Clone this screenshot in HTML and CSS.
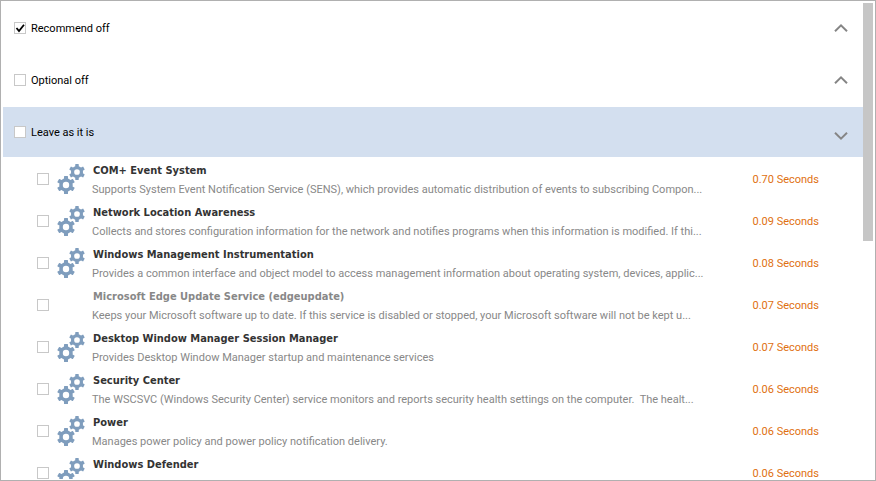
FILE: index.html
```html
<!DOCTYPE html>
<html lang="en">
<head>
  <meta charset="UTF-8" />
  <title>Services</title>
  <link rel="stylesheet" href="styles.css">
</head>
<body>
  <svg class="sprite" aria-hidden="true">
    <symbol id="gear" viewBox="-9 -9 18 18">
      <circle r="5" fill="none" stroke="currentColor" stroke-width="3.6" />
      <g fill="currentColor">
        <rect id="tooth" x="-2" y="-9" width="4" height="3.6" rx=".5" />
        <use href="#tooth" transform="rotate(60)" />
        <use href="#tooth" transform="rotate(120)" />
        <use href="#tooth" transform="rotate(180)" />
        <use href="#tooth" transform="rotate(240)" />
        <use href="#tooth" transform="rotate(300)" />
      </g>
    </symbol>
    <symbol id="gears" viewBox="0 0 28 30">
      <use href="#gear" x="0" y="12" width="18" height="18" />
      <use href="#gear" x="12" y="0" width="16" height="16" />
    </symbol>
    <symbol id="chevron" viewBox="0 0 14 8">
      <path d="M1 7.2 7 1.4l6 5.8" fill="none" stroke="currentColor" stroke-width="2" />
    </symbol>
  </svg>

  <main class="window">
    <div class="list">
      <header class="group">
        <label class="group-label"><input type="checkbox" checked /><span>Recommend off</span></label>
        <button type="button" class="toggle" aria-label="Expand Recommend off"><svg><use href="#chevron" /></svg></button>
      </header>
      <header class="group">
        <label class="group-label"><input type="checkbox" /><span>Optional off</span></label>
        <button type="button" class="toggle" aria-label="Expand Optional off"><svg><use href="#chevron" /></svg></button>
      </header>
      <header class="group active">
        <label class="group-label"><input type="checkbox" /><span>Leave as it is</span></label>
        <button type="button" class="toggle open" aria-label="Collapse Leave as it is"><svg><use href="#chevron" /></svg></button>
      </header>

      <ul class="services">
        <li class="service">
          <input type="checkbox" id="s1" />
          <svg class="icon"><use href="#gears" /></svg>
          <label class="info" for="s1">
            <span class="name">COM+ Event System</span>
            <span class="desc">Supports System Event Notification Service (SENS), which provides automatic distribution of events to subscribing Compon...</span>
          </label>
          <span class="time">0.70 Seconds</span>
        </li>
        <li class="service">
          <input type="checkbox" id="s2" />
          <svg class="icon"><use href="#gears" /></svg>
          <label class="info" for="s2">
            <span class="name">Network Location Awareness</span>
            <span class="desc">Collects and stores configuration information for the network and notifies programs when this information is modified. If thi...</span>
          </label>
          <span class="time">0.09 Seconds</span>
        </li>
        <li class="service">
          <input type="checkbox" id="s3" />
          <svg class="icon"><use href="#gears" /></svg>
          <label class="info" for="s3">
            <span class="name">Windows Management Instrumentation</span>
            <span class="desc">Provides a common interface and object model to access management information about operating system, devices, applic...</span>
          </label>
          <span class="time">0.08 Seconds</span>
        </li>
        <li class="service disabled">
          <input type="checkbox" id="s4" />
          <span class="icon"></span>
          <label class="info" for="s4">
            <span class="name">Microsoft Edge Update Service (edgeupdate)</span>
            <span class="desc">Keeps your Microsoft software up to date. If this service is disabled or stopped, your Microsoft software will not be kept u...</span>
          </label>
          <span class="time">0.07 Seconds</span>
        </li>
        <li class="service">
          <input type="checkbox" id="s5" />
          <svg class="icon"><use href="#gears" /></svg>
          <label class="info" for="s5">
            <span class="name">Desktop Window Manager Session Manager</span>
            <span class="desc">Provides Desktop Window Manager startup and maintenance services</span>
          </label>
          <span class="time">0.07 Seconds</span>
        </li>
        <li class="service">
          <input type="checkbox" id="s6" />
          <svg class="icon"><use href="#gears" /></svg>
          <label class="info" for="s6">
            <span class="name">Security Center</span>
            <span class="desc">The WSCSVC (Windows Security Center) service monitors and reports security health settings on the computer.&nbsp; The healt...</span>
          </label>
          <span class="time">0.06 Seconds</span>
        </li>
        <li class="service">
          <input type="checkbox" id="s7" />
          <svg class="icon"><use href="#gears" /></svg>
          <label class="info" for="s7">
            <span class="name">Power</span>
            <span class="desc">Manages power policy and power policy notification delivery.</span>
          </label>
          <span class="time">0.06 Seconds</span>
        </li>
        <li class="service">
          <input type="checkbox" id="s8" />
          <svg class="icon"><use href="#gears" /></svg>
          <label class="info" for="s8">
            <span class="name">Windows Defender</span>
          </label>
          <span class="time">0.06 Seconds</span>
        </li>
      </ul>
    </div>
    <div class="scrollbar"><div class="thumb"></div></div>
  </main>
</body>
</html>
```
FILE: styles.css
```css
* {
  box-sizing: border-box;
}
body {
  margin: 0;
  background: #fff;
  font-family: Tahoma, Roboto, sans-serif;
  font-size: 11px;
  line-height: 14px;
  color: #000;
}
.sprite {
  display: none;
}
.window {
  display: flex;
  height: 100vh;
  padding: 2px 2px 1px;
  border: 1px solid #b0b0b0;
  overflow: hidden;
}
.list {
  flex: 1;
  min-width: 0;
  overflow: hidden;
}
.group {
  display: flex;
  align-items: center;
  justify-content: space-between;
  height: 50px;
  margin-bottom: 2px;
  padding: 0 15px 0 11px;
}
.group.active {
  background: #d3dfef;
  margin-bottom: 1px;
}
.group-label {
  display: flex;
  align-items: center;
  gap: 5px;
}
.group-label span {
  padding-top: 2px;
}
input[type="checkbox"] {
  appearance: none;
  flex: none;
  width: 12px;
  height: 12px;
  margin: 0;
  border: 1px solid #c8c8c8;
  background: #fff;
}
input[type="checkbox"]:checked {
  background: #fff url("data:image/svg+xml,%3Csvg xmlns='http://www.w3.org/2000/svg' viewBox='0 0 10 10'%3E%3Cpath d='M1.5 5 4 8 9 1.8' fill='none' stroke='%23000' stroke-width='1.8'/%3E%3C/svg%3E") center / 10px 10px no-repeat;
}
.toggle {
  display: flex;
  padding: 0;
  border: none;
  background: none;
  color: #858585;
  cursor: pointer;
}
.toggle svg {
  width: 14px;
  height: 8px;
}
.toggle.open {
  padding-top: 8px;
}
.toggle.open svg {
  transform: rotate(180deg);
}
.services {
  margin: 0;
  padding: 0;
  list-style: none;
}
.service {
  display: flex;
  align-items: center;
  height: 42px;
  padding: 0 44px 0 34px;
}
.icon {
  flex: none;
  width: 28px;
  height: 30px;
  margin: 0 7px 0 8px;
  color: #7f9dbd;
}
.info {
  flex: 1;
  align-self: flex-start;
  min-width: 0;
  padding-top: 6px;
}
.name,
.desc {
  display: block;
  white-space: nowrap;
}
.name {
  margin-bottom: 5px;
  padding-left: 1px;
  font-family: Tahoma, 'DejaVu Sans Condensed', 'DejaVu Sans', sans-serif;
  font-weight: bold;
  color: #333;
}
.desc {
  color: #888;
}
.disabled .name {
  color: #888;
}
.time {
  flex: none;
  padding-top: 1px;
  line-height: 12px;
  color: #e07010;
}
.scrollbar {
  flex: none;
  width: 10px;
}
.thumb {
  height: 50%;
  background: #c6c6c6;
}
```
